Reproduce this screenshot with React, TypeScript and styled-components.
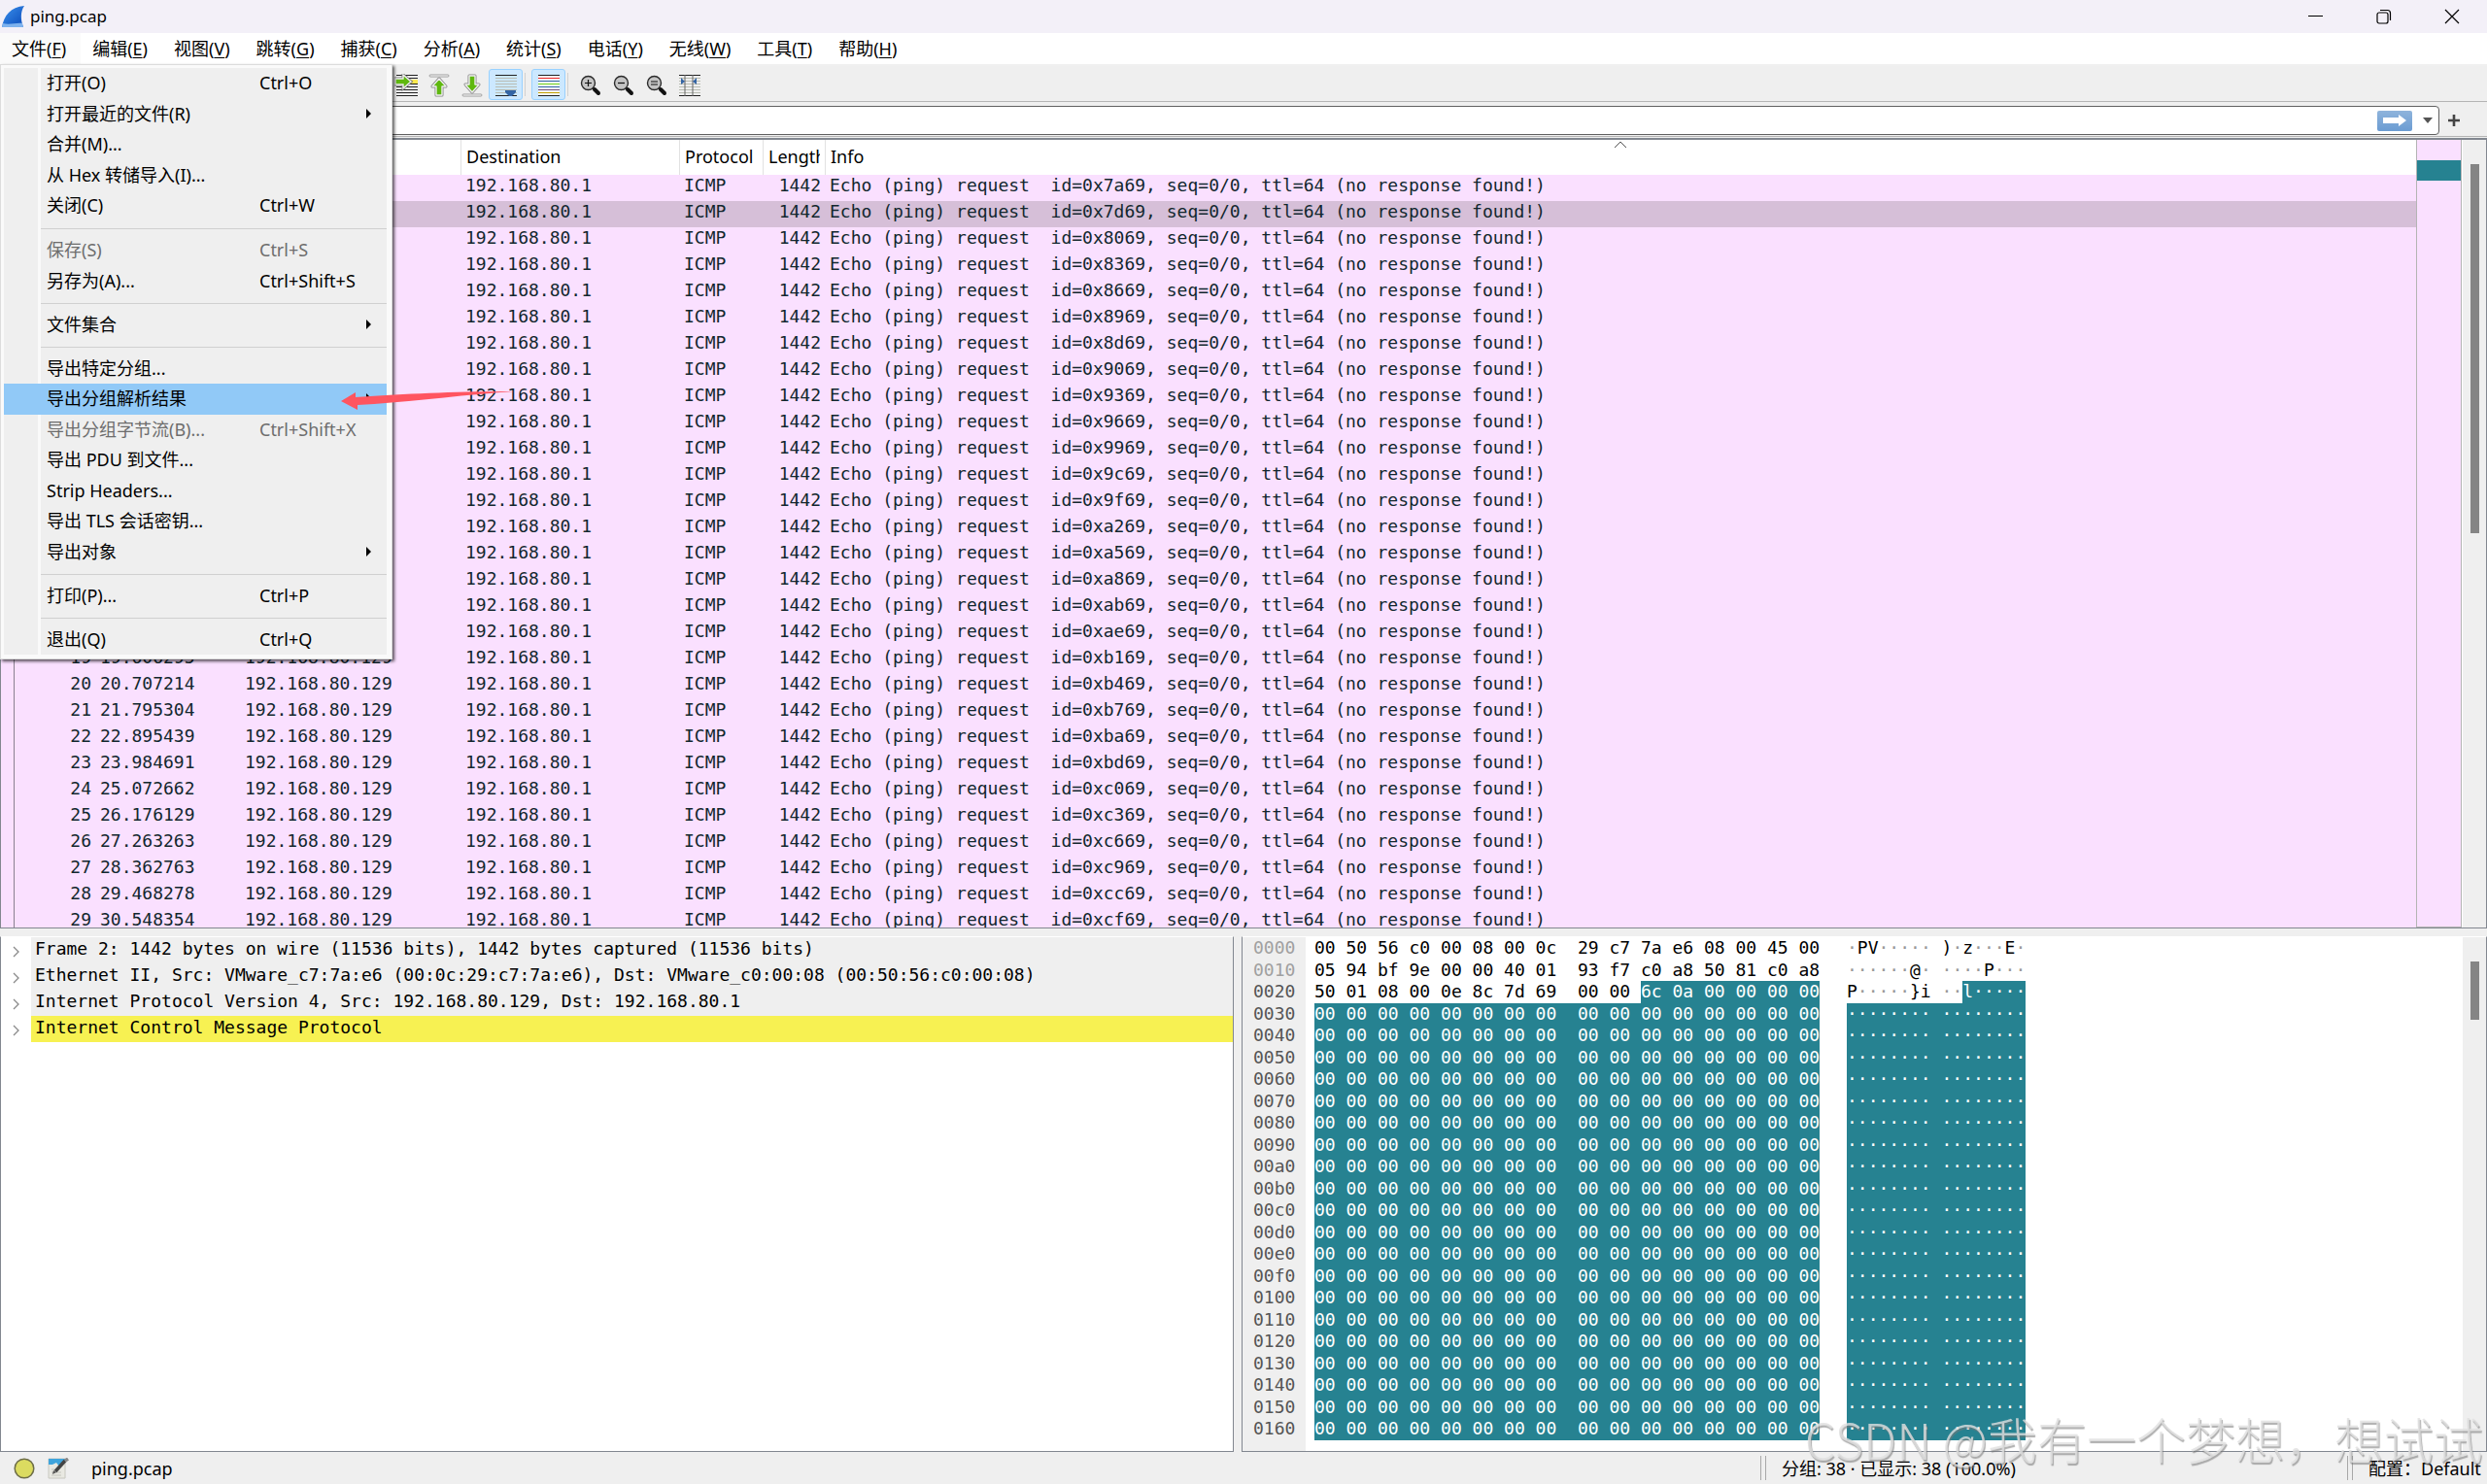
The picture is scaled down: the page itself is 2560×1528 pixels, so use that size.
import React from "react";
import styled, { createGlobalStyle } from "styled-components";

const UI = `"Noto Sans", "Noto Sans CJK SC", sans-serif`;
const MONO = `"DejaVu Sans Mono", "Liberation Mono", monospace`;
const PINK = "#fae0ff";
const TEAL = "#268291";
const CHROME = "#efefef";
const FRAME = "#828790";

const Global = createGlobalStyle`
  * { box-sizing: border-box; }
  body { margin: 0; font-family: ${UI}; font-size: 18px; color: #000; background: ${CHROME}; }
  button { font: inherit; color: inherit; background: none; border: 0; padding: 0; margin: 0; }
  svg { display: block; flex: none; }
`;

/* ---------- window chrome ---------- */

const Window = styled.div`
  position: relative;
  display: flex;
  flex-direction: column;
  height: 100vh;
  overflow: hidden;
  background: ${CHROME};
`;

const TitleBar = styled.header`
  display: flex;
  align-items: center;
  height: 34px;
  padding: 0 1px;
  background: #f3f0f8;
`;

const Title = styled.h1`
  flex: 1;
  margin: 0 0 0 5px;
  font-size: 17px;
  font-weight: 400;
  line-height: 34px;
`;

const CaptionButton = styled.button`
  display: flex;
  align-items: center;
  justify-content: center;
  width: 70px;
  height: 34px;
`;

const MenuBar = styled.nav`
  display: flex;
  height: 34px;
  background: #fff;
  border-bottom: 2px solid #f0f0f0;
`;

const MenuBarItem = styled.button<{ $open?: boolean }>`
  height: 32px;
  padding: 0 15px 0 12px;
  line-height: 32px;
  white-space: nowrap;
  background: ${(p) => (p.$open ? "#fafafa" : "transparent")};
  u { text-underline-offset: 2px; }
`;

const ToolBar = styled.div`
  display: flex;
  align-items: center;
  height: 37px;
  padding: 1px 401px 0;
  border-bottom: 1px solid #b4b4b4;
`;

const ToolButton = styled.button<{ $on?: boolean }>`
  display: flex;
  align-items: center;
  justify-content: center;
  width: ${(p) => (p.$on ? "35px" : "34px")};
  height: 32px;
  padding-top: 2px;
  border: 1px solid ${(p) => (p.$on ? "#99d1ff" : "transparent")};
  border-radius: 3px;
  background: ${(p) => (p.$on ? "#cce8ff" : "transparent")};
`;

const ToolDivider = styled.span`
  width: 1px;
  height: 24px;
  margin: 0 6px 0 2px;
  background: #d0d0d0;
`;

const FilterBar = styled.div`
  display: flex;
  align-items: center;
  height: 36px;
  padding: 3px 28px 0 30px;
  border-bottom: 1px solid #b4b4b4;
`;

const FilterField = styled.div`
  display: flex;
  align-items: center;
  flex: 1;
  height: 30px;
  padding-right: 5px;
  border: 1px solid #606060;
  border-radius: 4px;
  background: #fff;
`;

const FilterInput = styled.input`
  flex: 1;
  min-width: 0;
  border: 0;
  outline: 0;
  background: transparent;
  font: inherit;
`;

const ApplyButton = styled.button`
  display: flex;
  align-items: center;
  justify-content: center;
  width: 36px;
  height: 21px;
  margin-right: 10px;
  border-radius: 2px;
  background: linear-gradient(#8fb4dc, #6b9cd2);
`;

const PlainButton = styled.button`
  display: flex;
  align-items: center;
  justify-content: center;
  width: 12px;
  height: 24px;
`;

const AddButton = styled(PlainButton)`
  margin-left: 9px;
`;

/* ---------- packet list ---------- */

const Panes = styled.main`
  display: flex;
  flex-direction: column;
  gap: 8px;
  flex: 1;
  min-height: 0;
  padding-top: 1px;
`;

const PacketPane = styled.section`
  display: flex;
  flex: 813 1 0;
  min-height: 0;
  border: 1px solid ${FRAME};
  border-top-width: 2px;
`;

const PacketScroll = styled.div`
  flex: 1;
  min-width: 0;
  overflow: hidden;
  background: ${PINK};
`;

const PacketTable = styled.table`
  width: 100%;
  table-layout: fixed;
  border-collapse: separate;
  border-spacing: 0;
`;

const Col = styled.col<{ $w?: number }>`
  width: ${(p) => (p.$w ? `${p.$w}px` : "auto")};
`;

const HeadCell = styled.th<{ $line?: boolean }>`
  height: 36px;
  padding: 0 5px;
  overflow: hidden;
  font-weight: 400;
  text-align: left;
  line-height: 34px;
  vertical-align: top;
  white-space: nowrap;
  background: #fff;
  border-right: 1px solid ${(p) => (p.$line ? "#e2e2e2" : "#fff")};
`;

const HeadLabel = styled.div`
  overflow: hidden;
`;

const InfoHead = styled.div`
  display: grid;
  grid-template-columns: 1fr auto 1fr;
  svg { margin-top: 1px; }
`;

const PacketRow = styled.tr<{ $selected: boolean }>`
  background: ${(p) => (p.$selected ? "#d6bfd8" : PINK)};
  color: #12272e;
  font-family: ${MONO};
  font-size: 18px;
`;

const Cell = styled.td<{ $right?: boolean; $related?: boolean }>`
  height: 27px;
  padding: 0 5px 0 4px;
  line-height: 22px;
  vertical-align: top;
  white-space: pre;
  overflow: hidden;
  text-align: ${(p) => (p.$right ? "right" : "left")};
  border-right: ${(p) => (p.$related ? "1px solid #8a8090" : "0")};
`;

const MiniMap = styled.div`
  width: 47px;
  padding-top: 21px;
  background: ${PINK};
  border: 1px solid #b4b4b4;
  border-top: 0;
`;

const MiniMark = styled.div`
  height: 21px;
  background: ${TEAL};
`;

const ScrollTrack = styled.div`
  width: 25px;
  padding: 25px 7px 0 8px;
  background: ${CHROME};
  border-left: 1px solid #fff;
`;

const ScrollThumb = styled.div<{ $length: number }>`
  height: ${(p) => p.$length}px;
  background: #858585;
`;

/* ---------- lower panes ---------- */

const LowerPanes = styled.div`
  display: grid;
  grid-template-columns: 1270fr 1282fr;
  gap: 8px;
  flex: 532 1 0;
  min-height: 0;
`;

const DetailPane = styled.section`
  min-width: 0;
  background: #fff;
  border: 1px solid ${FRAME};
  border-top-color: #fff;
`;

const DetailList = styled.ul`
  margin: 0;
  padding: 0;
  list-style: none;
`;

const DetailRow = styled.li`
  display: flex;
  align-items: center;
  height: 27px;
`;

const Expander = styled.button`
  display: flex;
  justify-content: center;
  width: 31px;
  padding-top: 2px;
`;

const DetailText = styled.span<{ $selected?: boolean }>`
  flex: 1;
  height: 27px;
  padding-left: 4px;
  font-family: ${MONO};
  line-height: 24px;
  white-space: pre;
  background: ${(p) => (p.$selected ? "#f7f152" : CHROME)};
`;

const BytesPane = styled.section`
  display: flex;
  min-width: 0;
  background: #fff;
  border: 1px solid ${FRAME};
  border-top-color: #fff;
`;

const ByteGrid = styled.div`
  display: grid;
  grid-auto-rows: 1fr;
  flex: 1;
  padding-bottom: 11px;
  font-family: ${MONO};
  background: linear-gradient(to right, ${CHROME} 65px, #fff 65px);
`;

const ByteRow = styled.div`
  display: grid;
  grid-template-columns: 74px 548px auto;
  justify-content: start;
  min-height: 0;
  line-height: 22px;
  white-space: pre;
`;

const Offset = styled.span<{ $dim: boolean }>`
  padding-left: 11px;
  color: ${(p) => (p.$dim ? "#a0a0a0" : "#555")};
`;

const Run = styled.span`
  display: flex;
`;

const Marked = styled.span`
  color: #fff;
  background: ${TEAL};
`;

const Dot = styled.span`
  color: #999;
`;

/* ---------- status bar ---------- */

const StatusBar = styled.footer`
  display: grid;
  grid-template-columns: 1812fr 604fr 144px;
  align-items: center;
  height: 33px;
  line-height: 32px;
`;

const StatusFile = styled.div`
  display: flex;
  align-items: center;
  padding-left: 14px;
`;

const StatusName = styled.span`
  margin-left: 23px;
`;

const StatusIconGap = styled.span`
  width: 13px;
`;

const StatusPart = styled.div`
  display: flex;
  align-items: center;
  white-space: nowrap;
`;

const Grip = styled.span`
  width: 6px;
  height: 25px;
  margin-right: 16px;
  border: solid #a8a8a8;
  border-width: 0 1px;
`;

/* ---------- layers over the window ---------- */

const DropDown = styled.div`
  position: absolute;
  top: 66px;
  left: 0;
  width: 404px;
  padding: 3px 5px 4px 3px;
  background: #fafafa;
  border: 1px solid #dcdcdc;
  box-shadow: 2px 2px 3px rgba(0, 0, 0, 0.65);
`;

const MenuList = styled.ul`
  margin: 0;
  padding: 0;
  list-style: none;
  background: linear-gradient(to right, ${CHROME} 35px, #fafafa 35px, #fafafa 38px, ${CHROME} 38px);
`;

const MenuRow = styled.li`
  height: 31px;
  &:nth-child(odd) { height: 32px; }
`;

const MenuRule = styled.li`
  display: flex;
  align-items: center;
  height: 14px;
  padding-left: 38px;
  &::after { content: ""; flex: 1; height: 1px; background: #d0d0d0; }
`;

const MenuButton = styled.button<{ $active?: boolean }>`
  display: grid;
  grid-template-columns: 219px 1fr 10px;
  align-items: center;
  width: 100%;
  height: 100%;
  padding: 0 12px 2px 44px;
  text-align: left;
  line-height: 28px;
  white-space: nowrap;
  background: ${(p) => (p.$active ? "#91c9f7" : "transparent")};
  &:disabled { color: #6d6d6d; }
`;

const Pointer = styled.svg`
  position: absolute;
  left: 350px;
  top: 400px;
`;

const Watermark = styled.div`
  position: absolute;
  right: 4px;
  bottom: 12px;
  font-family: "Noto Sans CJK SC", sans-serif;
  font-size: 51px;
  font-weight: 300;
  line-height: 70px;
  white-space: nowrap;
  color: rgba(224, 224, 224, 0.8);
  text-shadow: 1px 2px 1px rgba(120, 120, 120, 0.6);
  pointer-events: none;
`;

/* ---------- data ---------- */

const MENUS: [string, string][] = [
  ["文件", "F"], ["编辑", "E"], ["视图", "V"], ["跳转", "G"], ["捕获", "C"], ["分析", "A"],
  ["统计", "S"], ["电话", "Y"], ["无线", "W"], ["工具", "T"], ["帮助", "H"],
];

type Entry = { label: string; keys?: string; sub?: boolean; off?: boolean; active?: boolean } | null;

const FILE_MENU: Entry[] = [
  { label: "打开(O)", keys: "Ctrl+O" },
  { label: "打开最近的文件(R)", sub: true },
  { label: "合并(M)..." },
  { label: "从 Hex 转储导入(I)..." },
  { label: "关闭(C)", keys: "Ctrl+W" },
  null,
  { label: "保存(S)", keys: "Ctrl+S", off: true },
  { label: "另存为(A)...", keys: "Ctrl+Shift+S" },
  null,
  { label: "文件集合", sub: true },
  null,
  { label: "导出特定分组..." },
  { label: "导出分组解析结果", sub: true, active: true },
  { label: "导出分组字节流(B)...", keys: "Ctrl+Shift+X", off: true },
  { label: "导出 PDU 到文件..." },
  { label: "Strip Headers..." },
  { label: "导出 TLS 会话密钥..." },
  { label: "导出对象", sub: true },
  null,
  { label: "打印(P)...", keys: "Ctrl+P" },
  null,
  { label: "退出(Q)", keys: "Ctrl+Q" },
];

const IDS = [
  "7a69", "7d69", "8069", "8369", "8669", "8969", "8d69", "9069", "9369", "9669",
  "9969", "9c69", "9f69", "a269", "a569", "a869", "ab69", "ae69", "b169", "b469",
  "b769", "ba69", "bd69", "c069", "c369", "c669", "c969", "cc69", "cf69",
];

const TIMES: Record<number, string> = {
  19: "19.606295", 20: "20.707214", 21: "21.795304", 22: "22.895439", 23: "23.984691",
  24: "25.072662", 25: "26.176129", 26: "27.263263", 27: "28.362763", 28: "29.468278", 29: "30.548354",
};

const DETAILS = [
  "Frame 2: 1442 bytes on wire (11536 bits), 1442 bytes captured (11536 bits)",
  "Ethernet II, Src: VMware_c7:7a:e6 (00:0c:29:c7:7a:e6), Dst: VMware_c0:00:08 (00:50:56:c0:00:08)",
  "Internet Protocol Version 4, Src: 192.168.80.129, Dst: 192.168.80.1",
  "Internet Control Message Protocol",
];

const ZERO_HEX = "00 00 00 00 00 00 00 00  00 00 00 00 00 00 00 00";
const ZERO_ASCII = "········ ········";

type Bytes = { hex: string; hexMarked: string; ascii: string; asciiMarked: string };

const HEAD_BYTES: Bytes[] = [
  { hex: "00 50 56 c0 00 08 00 0c  29 c7 7a e6 08 00 45 00", hexMarked: "", ascii: "·PV····· )·z···E·", asciiMarked: "" },
  { hex: "05 94 bf 9e 00 00 40 01  93 f7 c0 a8 50 81 c0 a8", hexMarked: "", ascii: "······@· ····P···", asciiMarked: "" },
  { hex: "50 01 08 00 0e 8c 7d 69  00 00 ", hexMarked: "6c 0a 00 00 00 00", ascii: "P·····}i ··", asciiMarked: "l·····" },
];

const BYTES: Bytes[] = HEAD_BYTES.concat(
  Array.from({ length: 20 }, () => ({ hex: "", hexMarked: ZERO_HEX, ascii: "", asciiMarked: ZERO_ASCII }))
);

/* ---------- icons ---------- */

const INK = "#222";
const PALE = "#b9bdb2";
const GREEN = "#5fb80f";
const BLUE = "#3465a4";

const Fin = () => (
  <svg width="25" height="24" viewBox="0 0 25 24">
    <defs>
      <linearGradient id="fin" x1="0" y1="0" x2="1" y2="1">
        <stop offset="0" stopColor="#3c93ee" />
        <stop offset="1" stopColor="#0a49b8" />
      </linearGradient>
    </defs>
    <path d="M1 23C3 11 10 2 24 1c-4 6-4 14-1 22z" fill="url(#fin)" />
    <path d="M1 23l1-4c7 2 14-1 20 0l1 4z" fill="#7db2ee" />
  </svg>
);

const Lines = ({ colors }: { colors: string[] }) => (
  <>
    {colors.map((c, i) => (
      <rect key={i} x="0" y={i * 3} width="22" height="1" fill={c} />
    ))}
  </>
);

const PAGE = [INK, PALE, PALE, PALE, PALE, PALE, PALE, INK];

const GoIcon = () => (
  <svg width="25" height="24" viewBox="0 0 25 24">
    <g transform="translate(2 1)"><Lines colors={[INK, INK, INK, INK, INK, INK, INK, INK]} /></g>
    <rect x="16" y="6" width="8" height="4" fill="#fce94f" />
    <path d="M1 5h8V1l8 7-8 7v-4H1z" fill={GREEN} stroke="#777" strokeWidth="3" />
    <path d="M1 5h8V1l8 7-8 7v-4H1z" fill={GREEN} stroke="#eee" strokeWidth="1.4" />
  </svg>
);

const ArrowIcon = ({ down }: { down?: boolean }) => (
  <svg width="22" height="24" viewBox="0 0 22 24">
    <g transform={down ? "rotate(180 11 12)" : undefined}>
      <rect x="1" y="1" width="20" height="2" rx="1" fill="#fff" stroke="#888" strokeWidth=".8" />
      <path d="M11 5l7 8h-4v9H8v-9H4z" fill={GREEN} stroke="#888" strokeWidth="3" strokeLinejoin="round" />
      <path d="M11 5l7 8h-4v9H8v-9H4z" fill={GREEN} stroke="#eee" strokeWidth="1.4" strokeLinejoin="round" />
    </g>
  </svg>
);

const AutoScrollIcon = () => (
  <svg width="22" height="22" viewBox="0 0 22 22">
    <Lines colors={PAGE} />
    <path d="M10 16h11v2l-4 4h-3l-4-4z" fill={BLUE} />
  </svg>
);

const ColorizeIcon = () => (
  <svg width="22" height="22" viewBox="0 0 22 22">
    <rect width="22" height="22" fill="#f4f8fb" />
    <Lines colors={[INK, "#ef2929", BLUE, "#73d216", BLUE, "#75507b", "#c4a000", INK]} />
  </svg>
);

const ZoomIcon = ({ sign }: { sign: "in" | "out" | "reset" }) => (
  <svg width="22" height="22" viewBox="0 0 22 22">
    <path d="M13 13l2 2" stroke="#111" strokeWidth="2" />
    <path d="M15 15l4 4" stroke="#111" strokeWidth="4" strokeLinecap="round" />
    <circle cx="8.500" cy="8.500" r="7" fill="#c4c4c4" stroke="#2a2a2a" strokeWidth="1.4" />
    {sign === "in" && <path d="M5 8.500h7M8.500 5v7" stroke="#111" strokeWidth="1.2" />}
    {sign === "out" && <path d="M5 8.500h7" stroke="#111" strokeWidth="1.2" />}
    {sign === "reset" && <path d="M5 7h7M5 10h7" stroke="#111" strokeWidth="1.2" />}
  </svg>
);

const ColumnsIcon = () => (
  <svg width="22" height="22" viewBox="0 0 22 22">
    <Lines colors={PAGE} />
    <path d="M6 0v22M14 0v22" stroke="#666" strokeWidth="1" />
    <path d="M2 3l4 4-4 3zM18 3l-4 4 4 3z" fill={BLUE} />
  </svg>
);

const Chevron = () => (
  <svg width="8" height="12" viewBox="0 0 8 12">
    <path d="M1 1l5 5-5 5" fill="none" stroke="#8a8a8a" strokeWidth="1.3" />
  </svg>
);

const SubArrow = () => (
  <svg width="6" height="10" viewBox="0 0 6 10"><path d="M1 0l5 5-5 5z" fill="#000" /></svg>
);

/* ---------- parts ---------- */

const Ascii = ({ text }: { text: string }) => (
  <span>
    {(text.match(/·+|[^·]+/g) || []).map((part, i) => (part[0] === "·" ? <Dot key={i}>{part}</Dot> : part))}
  </span>
);

const FileMenu = () => (
  <DropDown>
    <MenuList>
      {FILE_MENU.map((e, i) =>
        e === null ? (
          <MenuRule key={i} />
        ) : (
          <MenuRow key={i}>
            <MenuButton disabled={e.off} $active={e.active}>
              <span>{e.label}</span>
              <span>{e.keys}</span>
              {e.sub && <SubArrow />}
            </MenuButton>
          </MenuRow>
        )
      )}
    </MenuList>
  </DropDown>
);

const PacketList = () => (
  <PacketPane>
    <PacketScroll>
      <PacketTable>
        <colgroup>
          <Col $w={14} /><Col $w={84} /><Col $w={149} /><Col $w={227} />
          <Col $w={225} /><Col $w={86} /><Col $w={64} /><Col />
        </colgroup>
        <thead>
          <tr>
            <HeadCell /><HeadCell $line /><HeadCell $line /><HeadCell $line />
            <HeadCell $line>Destination</HeadCell>
            <HeadCell $line>Protocol</HeadCell>
            <HeadCell $line><HeadLabel>Length</HeadLabel></HeadCell>
            <HeadCell>
              <InfoHead>
                <span>Info</span>
                <svg width="14" height="8" viewBox="0 0 14 8"><path d="M1 7l6-6 6 6" fill="none" stroke="#555" /></svg>
              </InfoHead>
            </HeadCell>
          </tr>
        </thead>
        <tbody>
          {IDS.map((id, i) => {
            const time = TIMES[i + 1];
            return (
              <PacketRow key={id} $selected={i === 1}>
                <Cell $related />
                <Cell $right>{time && i + 1}</Cell>
                <Cell>{time}</Cell>
                <Cell>{time && "192.168.80.129"}</Cell>
                <Cell>192.168.80.1</Cell>
                <Cell>ICMP</Cell>
                <Cell $right>1442</Cell>
                <Cell>{`Echo (ping) request  id=0x${id}, seq=0/0, ttl=64 (no response found!)`}</Cell>
              </PacketRow>
            );
          })}
        </tbody>
      </PacketTable>
    </PacketScroll>
    <MiniMap><MiniMark /></MiniMap>
    <ScrollTrack><ScrollThumb $length={380} /></ScrollTrack>
  </PacketPane>
);

const Lower = () => (
  <LowerPanes>
    <DetailPane>
      <DetailList>
        {DETAILS.map((d, i) => (
          <DetailRow key={d}>
            <Expander aria-label="展开"><Chevron /></Expander>
            <DetailText $selected={i === 3}>{d}</DetailText>
          </DetailRow>
        ))}
      </DetailList>
    </DetailPane>
    <BytesPane>
      <ByteGrid>
        {BYTES.map((b, i) => (
          <ByteRow key={i}>
            <Offset $dim={i < 2}>{(i * 16).toString(16).padStart(4, "0")}</Offset>
            <Run>{b.hex && <span>{b.hex}</span>}{b.hexMarked && <Marked>{b.hexMarked}</Marked>}</Run>
            <Run>{b.ascii && <Ascii text={b.ascii} />}{b.asciiMarked && <Marked>{b.asciiMarked}</Marked>}</Run>
          </ByteRow>
        ))}
      </ByteGrid>
      <ScrollTrack><ScrollThumb $length={60} /></ScrollTrack>
    </BytesPane>
  </LowerPanes>
);

export default function App() {
  return (
    <Window>
      <Global />
      <TitleBar>
        <Fin />
        <Title>ping.pcap</Title>
        <CaptionButton aria-label="最小化">
          <svg width="16" height="16"><path d="M0 7.500h15" stroke="#000" /></svg>
        </CaptionButton>
        <CaptionButton aria-label="还原">
          <svg width="16" height="16" viewBox="0 0 16 16" fill="none" stroke="#000" strokeWidth="1.2">
            <rect x="1" y="4" width="11" height="11" rx="2" />
            <path d="M4 1.500h7.500a3 3 0 0 1 3 3V12" />
          </svg>
        </CaptionButton>
        <CaptionButton aria-label="关闭">
          <svg width="16" height="16"><path d="M1 1l14 14M15 1L1 15" stroke="#000" strokeWidth="1.2" /></svg>
        </CaptionButton>
      </TitleBar>
      <MenuBar>
        {MENUS.map(([name, key], i) => (
          <MenuBarItem key={key} $open={i === 0}>{name}(<u>{key}</u>)</MenuBarItem>
        ))}
      </MenuBar>
      <ToolBar>
        <ToolButton aria-label="转到分组"><GoIcon /></ToolButton>
        <ToolButton aria-label="首个分组"><ArrowIcon /></ToolButton>
        <ToolButton aria-label="末个分组"><ArrowIcon down /></ToolButton>
        <ToolButton aria-label="自动滚动" $on><AutoScrollIcon /></ToolButton>
        <ToolDivider />
        <ToolButton aria-label="着色" $on><ColorizeIcon /></ToolButton>
        <ToolDivider />
        <ToolButton aria-label="放大"><ZoomIcon sign="in" /></ToolButton>
        <ToolButton aria-label="缩小"><ZoomIcon sign="out" /></ToolButton>
        <ToolButton aria-label="正常大小"><ZoomIcon sign="reset" /></ToolButton>
        <ToolButton aria-label="调整列宽"><ColumnsIcon /></ToolButton>
      </ToolBar>
      <FilterBar>
        <FilterField>
          <FilterInput aria-label="显示过滤器" />
          <ApplyButton aria-label="应用">
            <svg width="26" height="12" viewBox="0 0 26 12"><path d="M1 3h16V0l8 6-8 6V9H1z" fill="#fff" /></svg>
          </ApplyButton>
          <PlainButton aria-label="历史">
            <svg width="10" height="6" viewBox="0 0 10 6"><path d="M0 0h10L5 6z" fill="#555" /></svg>
          </PlainButton>
        </FilterField>
        <AddButton aria-label="添加">
          <svg width="12" height="12" viewBox="0 0 12 12"><path d="M6 0v12M0 6h12" stroke="#444" strokeWidth="2.6" /></svg>
        </AddButton>
      </FilterBar>
      <Panes>
        <PacketList />
        <Lower />
      </Panes>
      <StatusBar>
        <StatusFile>
          <svg width="22" height="22" viewBox="0 0 22 22"><circle cx="11" cy="11" r="9.800" fill="#dbdb60" stroke="#6d6d48" strokeWidth="1.5" /></svg>
          <StatusIconGap />
          <svg width="22" height="22" viewBox="0 0 22 22">
            <path d="M1 1h17v20H1z" fill="#e9e9e2" stroke="#c8c8c0" />
            <path d="M1 1h17v3l-6 5-3-4-4 2H1z" fill="#3fa4dc" />
            <path d="M4 12h3M4 15h10M4 18h10" stroke="#c4c4bc" />
            <path d="M8 14l10-11" stroke="#444" strokeWidth="3.6" />
            <path d="M18 3l3-2" stroke="#888" strokeWidth="3.4" />
            <path d="M5 17l1-4 3 2z" fill="#555" />
          </svg>
          <StatusName>ping.pcap</StatusName>
        </StatusFile>
        <StatusPart><Grip />分组: 38 · 已显示: 38 (100.0%)</StatusPart>
        <StatusPart><Grip />配置：Default</StatusPart>
      </StatusBar>
      <FileMenu />
      <Pointer width="184" height="24" viewBox="0 0 184 24">
        <path d="M1 13L16 4v5C60 6 120 3 180 3 130 6 70 14 18 17v5z" fill="#ff5560" />
      </Pointer>
      <Watermark>CSDN @我有一个梦想，想试试</Watermark>
    </Window>
  );
}
